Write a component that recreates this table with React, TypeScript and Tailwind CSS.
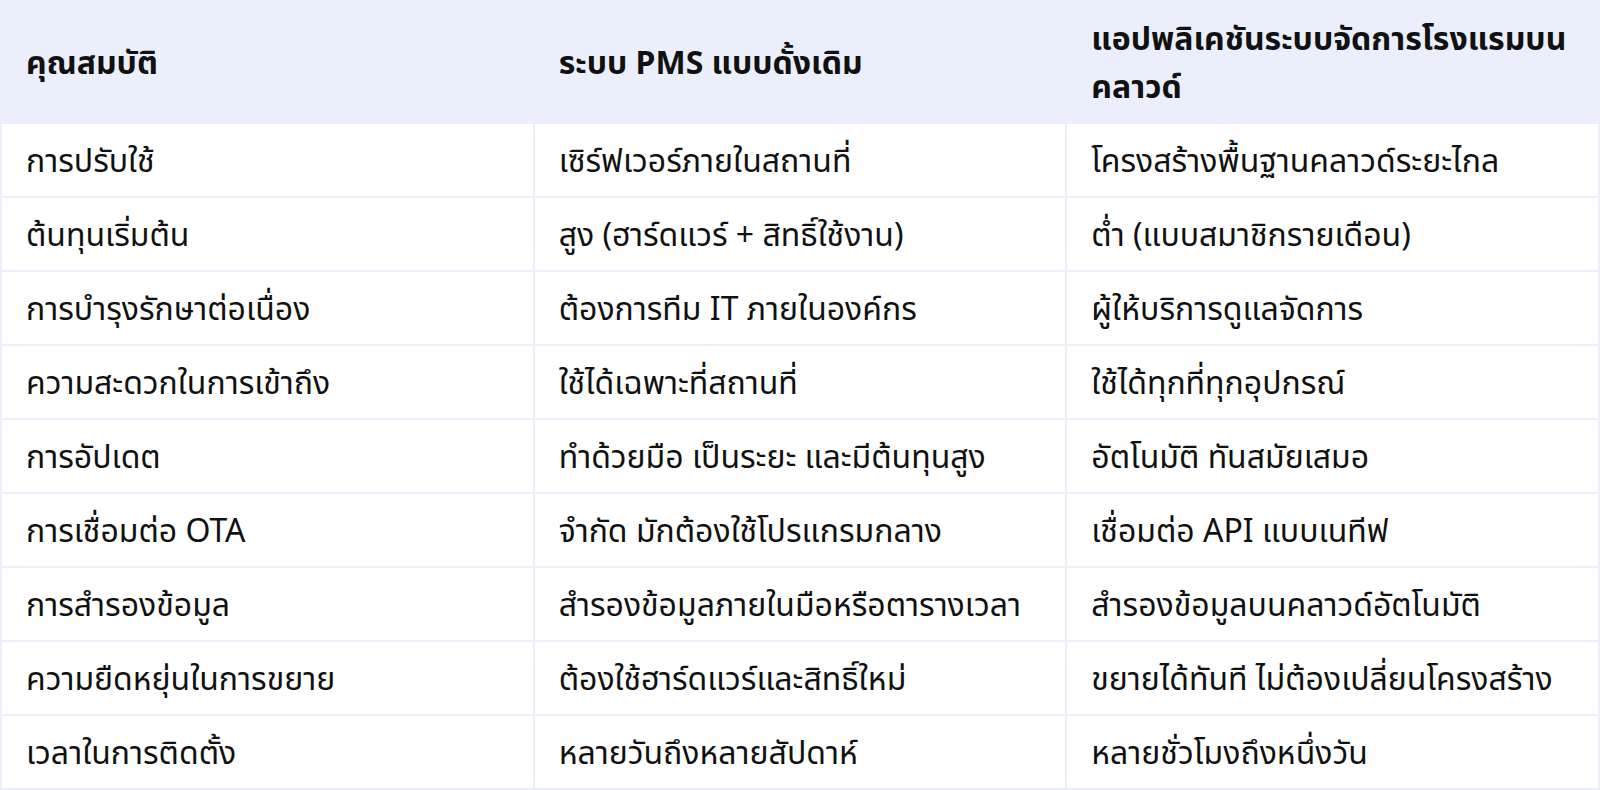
const ROWS: [string, string, string][] = [
  ["การปรับใช้", "เซิร์ฟเวอร์ภายในสถานที่", "โครงสร้างพื้นฐานคลาวด์ระยะไกล"],
  ["ต้นทุนเริ่มต้น", "สูง (ฮาร์ดแวร์ + สิทธิ์ใช้งาน)", "ต่ำ (แบบสมาชิกรายเดือน)"],
  ["การบำรุงรักษาต่อเนื่อง", "ต้องการทีม IT ภายในองค์กร", "ผู้ให้บริการดูแลจัดการ"],
  ["ความสะดวกในการเข้าถึง", "ใช้ได้เฉพาะที่สถานที่", "ใช้ได้ทุกที่ทุกอุปกรณ์"],
  ["การอัปเดต", "ทำด้วยมือ เป็นระยะ และมีต้นทุนสูง", "อัตโนมัติ ทันสมัยเสมอ"],
  ["การเชื่อมต่อ OTA", "จำกัด มักต้องใช้โปรแกรมกลาง", "เชื่อมต่อ API แบบเนทีฟ"],
  ["การสำรองข้อมูล", "สำรองข้อมูลภายในมือหรือตารางเวลา", "สำรองข้อมูลบนคลาวด์อัตโนมัติ"],
  ["ความยืดหยุ่นในการขยาย", "ต้องใช้ฮาร์ดแวร์และสิทธิ์ใหม่", "ขยายได้ทันที ไม่ต้องเปลี่ยนโครงสร้าง"],
  ["เวลาในการติดตั้ง", "หลายวันถึงหลายสัปดาห์", "หลายชั่วโมงถึงหนึ่งวัน"],
];

const HEAD = ["คุณสมบัติ", "ระบบ PMS แบบดั้งเดิม", "แอปพลิเคชันระบบจัดการโรงแรมบนคลาวด์"];

export default function App() {
  return (
    <div className="w-[1600px] bg-white font-['Noto_Sans','Noto_Sans_Thai',sans-serif] text-[#111111]">
      <table className="w-full table-fixed border-collapse">
        <thead>
          <tr className="bg-[#eaeffb]">
            {HEAD.map((h, i) => (
              <th
                key={i}
                className="border-2 border-[#eaeffb] px-6 py-3 text-left align-middle text-[32px] font-bold leading-[48px]"
              >
                {h}
              </th>
            ))}
          </tr>
        </thead>
        <tbody>
          {ROWS.map((row, r) => (
            <tr key={r}>
              {row.map((cell, c) => (
                <td
                  key={c}
                  className="border-2 border-[#eaeffb] px-6 py-3 text-left align-middle text-[32px] leading-[48px]"
                >
                  {cell}
                </td>
              ))}
            </tr>
          ))}
        </tbody>
      </table>
    </div>
  );
}
